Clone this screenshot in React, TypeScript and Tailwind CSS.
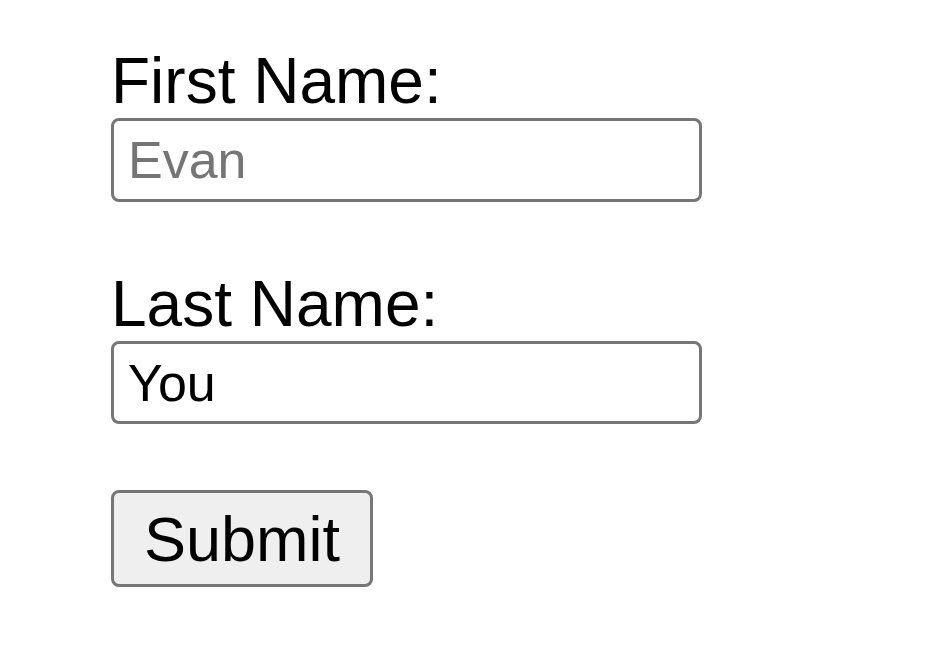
import { useState } from "react";

export default function App() {
    const [lastName, setLastName] = useState("You");

    return (
        <div className="min-h-screen bg-white pl-[111px] pt-[45px] font-['Liberation_Sans',Arial,sans-serif] text-black">
            <form className="flex flex-col items-start" onSubmit={(e) => e.preventDefault()}>
                <label className="block text-[64px] leading-[72px]" htmlFor="first">
                    First Name:
                </label>
                <input
                    id="first"
                    placeholder="Evan"
                    className="mt-[1px] h-[84px] w-[591px] rounded-[8px] border-[3px] border-[#767676] bg-white px-[14px] text-[52px] text-black placeholder:text-[#757575] outline-none"
                />
                <label className="mt-[66px] block text-[64px] leading-[72px]" htmlFor="last">
                    Last Name:
                </label>
                <input
                    id="last"
                    value={lastName}
                    onChange={(e) => setLastName(e.target.value)}
                    className="mt-[1px] h-[83px] w-[591px] rounded-[8px] border-[3px] border-[#767676] bg-white px-[14px] text-[52px] text-black outline-none"
                />
                <button
                    type="submit"
                    className="mt-[66px] h-[97px] w-[262px] rounded-[8px] border-[3px] border-[#767676] bg-[#efefef] text-[63px] leading-[72px] text-black"
                >
                    Submit
                </button>
            </form>
        </div>
    );
}
